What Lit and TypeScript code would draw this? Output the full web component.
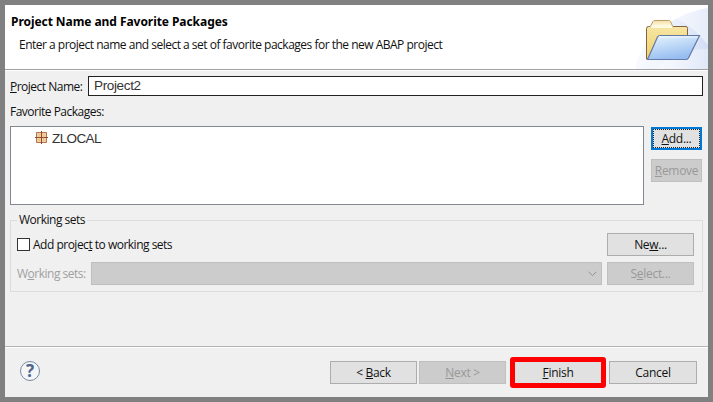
import { LitElement, html, css, svg } from "lit";
import { customElement } from "lit/decorators.js";

const folder = svg`
  <defs>
    <linearGradient id="back" x1="0" y1="0" x2="0" y2="1"><stop offset="0" stop-color="#f6e6a4"/><stop offset="1" stop-color="#f0cf68"/></linearGradient>
    <linearGradient id="front" x1="0" y1="0" x2="0.4" y2="1"><stop offset="0" stop-color="#e9f6fe"/><stop offset="1" stop-color="#96bdf0"/></linearGradient>
    <linearGradient id="sky" x1="0" y1="0" x2="1" y2="0"><stop offset="0" stop-color="#f8faff"/><stop offset=".5" stop-color="#eef3fc"/><stop offset="1" stop-color="#d3def6"/></linearGradient>
    <linearGradient id="tab" x1="0" y1="0" x2="0" y2="1"><stop offset="0" stop-color="#f3dfa0"/><stop offset="1" stop-color="#fffef4"/></linearGradient>
  </defs>
  <path d="M5 64C10 36 38 10 78 3V64Z" fill="url(#sky)"/>
  <path d="M26 64C36 52 54 44 78 44V64Z" fill="#fff" opacity=".3"/>
  <path d="M46 13Q64 22 78 40V3Q60 6 46 13Z" fill="#fff" opacity=".45"/>
  <path d="M16.500 54V23.500Q16.500 21.500 18.500 21.500H56Q57.500 21.500 57.500 23.500V54Z" fill="url(#back)" stroke="#86623f"/>
  <path d="M20 22L23 16.500Q23.500 15.500 25 15.500H38.500Q40 15.500 40.500 16.500L43 22Z" fill="url(#tab)" stroke="#bd9b66"/>
  <path d="M20.500 22H42.500" stroke="#fff9df" stroke-width="2"/>
  <path d="M17.500 54.500L27.500 32Q28.200 30.500 30 30.500H69.500L58.500 53Q57.500 54.500 56 54.500Z" fill="url(#front)" stroke="#6379a8" stroke-width="1.200"/>
  <path d="M29 32H68" stroke="#f5fbff" opacity=".8"/>`;

@customElement("app-root")
export class AppRoot extends LitElement {
  static styles = css`
    :host { display: block; }
    * { box-sizing: border-box; }
    .window {
      width: 713px; height: 402px; border: 5px solid #808080;
      background: #f0f0f0; color: #111; overflow: hidden;
      font: 12px/16px "Open Sans", "Noto Sans", sans-serif;
      letter-spacing: -0.5px; white-space: nowrap;
      display: flex; flex-direction: column;
    }
    svg { display: block; flex: none; }
    .header { height: 66px; flex: none; background: #fff; border-bottom: 1px solid #fff; box-shadow: inset 0 -1px #a0a0a0; display: flex; justify-content: space-between; }
    .titles { padding: 9px 0 0 6px; }
    .title { font: 700 12px/16px "Noto Sans", sans-serif; color: #000; letter-spacing: -0.06px; }
    .sub { padding: 7px 0 0 8px; }
    .main { padding: 5px 5px 0; height: 275px; flex: none; }
    .name { display: flex; height: 20px; }
    .name-label { width: 78px; padding-top: 3px; }
    .field { flex: 1; border: 1px solid #222; background: #fff; padding: 1px 5px; font: 13.5px/16px "Liberation Sans", sans-serif; letter-spacing: -0.35px; color: #333; }
    .fav { padding-top: 8px; height: 30px; }
    .lists { display: flex; height: 79px; gap: 7px; }
    .list { width: 634px; border: 1px solid #828790; background: #fff; padding: 4px 0 0 24px; }
    .item { display: flex; gap: 4px; font: 13.5px/16px "Liberation Sans", sans-serif; letter-spacing: -0.62px; color: #333; }
    .side { width: 51px; display: grid; grid-auto-rows: 23px; gap: 9px; padding-top: 1px; }
    .btn { height: 23px; border: 1px solid #adadad; background: #e1e1e1; display: flex; align-items: center; justify-content: center; color: #111; letter-spacing: -0.3px; }
    .off { background: #ccc; border-color: #bfbfbf; color: #999; }
    .focus { border: 2px solid #0078d7; outline: 1px dotted #222; outline-offset: -3px; }
    .group { margin: 7px 0 0; padding: 5px 8px 6px 6px; border: 1px solid #dcdcdc; height: 80px; width: 693px; }
    .legend { padding: 0 2px; display: block; height: 16px; }
    .row { display: flex; justify-content: space-between; height: 23px; margin-bottom: 6px; }
    .check { display: flex; gap: 3px; align-items: center; }
    .box { width: 13px; height: 13px; border: 1px solid #333; background: #fff; }
    .row .btn { width: 87px; }
    .ws { width: 74px; color: #a0a0a0; padding: 4px 0 0; }
    .combo { width: 511px; margin-right: 5px; border: 1px solid #bfbfbf; background: #ccc; display: flex; align-items: center; justify-content: flex-end; padding-right: 4px; }
    .footer { flex: 1; border-top: 1px solid #b4b4b4; box-shadow: inset 0 1px #fff; display: flex; padding: 10px 11px 0 15px; justify-content: space-between; }
    .actions { display: flex; align-items: flex-start; }
    .actions .btn { width: 87px; margin: 4px 2px 0 0; }
    .actions .ring { width: 96px; height: 31px; border: 5px solid #f00; border-radius: 3px; margin: 0 3px 0 2px; }
    .actions .cancel { width: 88px; margin-right: 0; }
    .help { width: 20px; height: 20px; margin-top: 4px; border: 1.5px solid #7889a5; border-radius: 50%; background: #f5f6f8; display: flex; align-items: center; justify-content: center; font: 700 17px/18px "Noto Sans", sans-serif; letter-spacing: 0; color: #4e678c; }
    u { text-underline-offset: 1px; text-decoration-thickness: 1px; text-decoration-skip-ink: none; }
  `;

  render() {
    return html`<div class="window">
      <div class="header">
        <div class="titles">
          <div class="title">Project Name and Favorite Packages</div>
          <div class="sub">Enter a project name and select a set of favorite packages for the new ABAP project</div>
        </div>
        <svg width="78" height="64" viewBox="0 0 78 64" fill="none">${folder}</svg>
      </div>
      <div class="main">
        <div class="name"><div class="name-label"><u>P</u>roject Name:</div><div class="field">Project2</div></div>
        <div class="fav">Favorite Packages:</div>
        <div class="lists">
          <div class="list"><div class="item">
            <svg width="13" height="14" viewBox="0 0 13 14" fill="none">
              <path d="M1.500 1.500H11.500V11.500H1.500Z" fill="#efcf9d" stroke="#b8734c"/>
              <path d="M6.500 0V13M0 6.500H13" stroke="#8c4a32"/>
              <path d="M4.500 3V10M8.500 3V10" stroke="#d9a878" opacity=".35"/>
            </svg><span>ZLOCAL</span></div></div>
          <div class="side">
            <div class="btn focus"><span><u>A</u>dd...</span></div>
            <div class="btn off"><span><u>R</u>emove</span></div>
          </div>
        </div>
        <fieldset class="group">
          <legend class="legend">Working sets</legend>
          <div class="row">
            <div class="check"><div class="box"></div><span>Add projec<u>t</u> to working sets</span></div>
            <div class="btn"><span>Ne<u>w</u>...</span></div>
          </div>
          <div class="row">
            <div class="ws">W<u>o</u>rking sets:</div>
            <div class="combo"><svg width="9" height="6" viewBox="0 0 9 6" fill="none"><path d="M.7.8L4.500 4.600L8.300.8" stroke="#929292"/></svg></div>
            <div class="btn off"><span>S<u>e</u>lect...</span></div>
          </div>
        </fieldset>
      </div>
      <div class="footer">
        <div class="help">?</div>
        <div class="actions">
          <div class="btn"><span>&lt; <u>B</u>ack</span></div>
          <div class="btn off"><span><u>N</u>ext &gt;</span></div>
          <div class="btn ring"><span><u>F</u>inish</span></div>
          <div class="btn cancel"><span>Cancel</span></div>
        </div>
      </div>
    </div>`;
  }
}
